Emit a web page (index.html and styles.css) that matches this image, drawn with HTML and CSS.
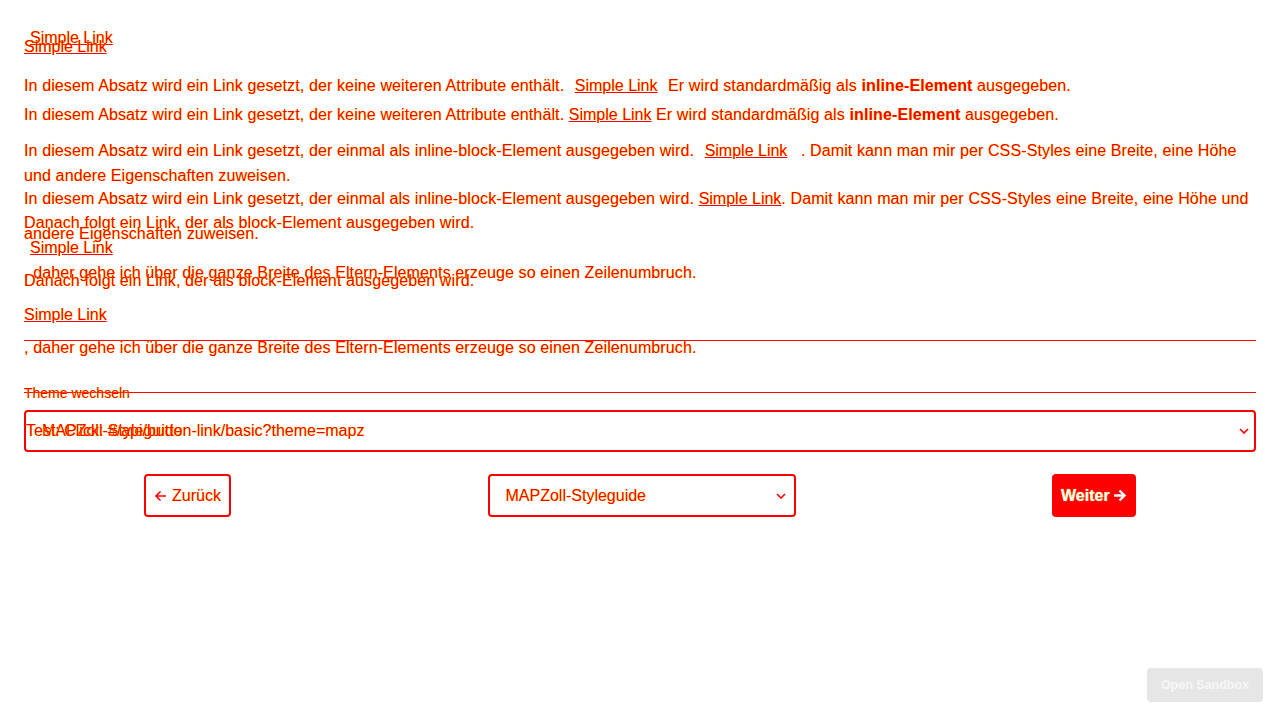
FILE: index.html
```html
<!DOCTYPE html>
<html lang="de">
<head>
<meta charset="utf-8">
<title>Button Link</title>
<link rel="stylesheet" href="styles.css">
</head>
<body>
<div class="stage">
  <div class="layer layer-a">
    <div class="a-l1"><a class="lnk lnk-pad" href="#">Simple Link</a></div>
    <p class="a-p1">In diesem Absatz wird ein Link gesetzt, der keine weiteren Attribute enthält. <a class="lnk lnk-pad" href="#">Simple Link</a> Er wird standardmäßig als <b>inline-Element</b> ausgegeben.</p>
    <p class="a-p2">In diesem Absatz wird ein Link gesetzt, der einmal als inline-block-Element ausgegeben wird. <a class="lnk lnk-pad lnk-wide" href="#">Simple Link</a> . Damit kann man mir per CSS-Styles eine Breite, eine Höhe und andere Eigenschaften zuweisen.</p>
    <p class="a-p3">Danach folgt ein Link, der als block-Element ausgegeben wird.</p>
    <a class="lnk lnk-block" href="#">Simple Link</a>
    <p class="a-p4">, daher gehe ich über die ganze Breite des Eltern-Elements erzeuge so einen Zeilenumbruch.</p>
  </div>

  <div class="layer layer-b">
    <div class="b-l1"><a class="lnk" href="#">Simple Link</a></div>
    <p class="b-p1">In diesem Absatz wird ein Link gesetzt, der keine weiteren Attribute enthält. <a class="lnk" href="#">Simple Link</a> Er wird standardmäßig als <b>inline-Element</b> ausgegeben.</p>
    <p class="b-p2">In diesem Absatz wird ein Link gesetzt, der einmal als inline-block-Element ausgegeben wird. <a class="lnk" href="#">Simple Link</a>. Damit kann man mir per CSS-Styles eine Breite, eine Höhe und andere Eigenschaften zuweisen.</p>
    <p class="b-p3">Danach folgt ein Link, der als block-Element ausgegeben wird.</p>
    <div class="b-block"><a class="lnk" href="#">Simple Link</a></div>
    <div class="rule rule-block"></div>
    <p class="b-p4">, daher gehe ich über die ganze Breite des Eltern-Elements erzeuge so einen Zeilenumbruch.</p>

    <div class="theme">
      <div class="rule"></div>
      <div class="legend">Theme wechseln</div>
      <div class="select select-wide">
        <span class="sel-ghost">Test: Click: #/api/button-link/basic?theme=mapz</span>
        <span class="sel-text">MAPZoll-Styleguide</span>
        <svg class="chev" width="10" height="6" viewBox="0 0 10 6"><path d="M1 1l4 4 4-4" fill="none" stroke="#f00" stroke-width="1.6"/></svg>
      </div>
    </div>

    <div class="nav">
      <a class="btn btn-outline" href="#"><svg class="ico" width="13" height="12" viewBox="0 0 13 12"><path d="M12 6H2M6.5 1.5L2 6l4.5 4.5" fill="none" stroke="#f00" stroke-width="1.6"/></svg>Zurück</a>
      <div class="select select-mid">
        <span class="sel-text">MAPZoll-Styleguide</span>
        <svg class="chev" width="10" height="6" viewBox="0 0 10 6"><path d="M1 1l4 4 4-4" fill="none" stroke="#f00" stroke-width="1.6"/></svg>
      </div>
      <a class="btn btn-solid" href="#">Weiter<svg class="ico-r" width="14" height="13" viewBox="0 0 14 13"><path d="M1 6.5h10M6.5 1.5l5 5-5 5" fill="none" stroke="#fff" stroke-width="2.4"/></svg></a>
    </div>
  </div>
</div>
<a class="sandbox" href="#">Open Sandbox</a>
</body>
</html>
```

FILE: styles.css
```css
html, body {
  margin: 0;
  padding: 0;
  background: #fff;
}
body {
  font-family: "Liberation Sans", Arial, sans-serif;
  font-size: 16px;
  color: #f00;
  width: 1280px;
  height: 720px;
  overflow: hidden;
}
.stage {
  position: relative;
  width: 1280px;
  height: 720px;
}
.layer {
  position: absolute;
  top: 0;
  left: 0;
  right: 0;
  padding: 0 24px;
  letter-spacing: 0.12px;
  text-shadow: 0 0 1px #ff0;
}
p { margin: 0; }
b { font-weight: bold; }
.lnk {
  color: #f00;
  text-decoration: underline;
  letter-spacing: 0;
}
.lnk-pad {
  display: inline-block;
  padding: 0 6px;
}
.lnk-wide { padding-right: 9px; }
.lnk-block {
  display: block;
  padding: 0 6px;
  line-height: 25px;
}

/* layer A */
.layer-a { line-height: 25px; }
.a-l1 { margin-top: 25px; }
.a-p1 { margin-top: 23px; }
.a-p2 { margin-top: 40px; }
.a-p3 { margin-top: 22px; }

/* layer B */
.layer-b { line-height: 34px; }
.b-l1 { margin-top: 30px; }
.b-p1 { margin-top: 34px; }
.b-p2 { margin-top: 49px; line-height: 35px; }
.b-p3 { margin-top: 13px; }
.rule {
  height: 0;
  border-top: 1px solid #f00;
}
.rule-block { margin-top: 8px; }
.b-p4 { line-height: 14px; }

.theme { margin-top: 37px; }
.legend {
  margin-top: -8px;
  line-height: 16px;
  font-size: 14px;
  letter-spacing: 0;
}
.select {
  position: relative;
  display: flex;
  align-items: center;
  box-sizing: border-box;
  border: 2px solid #f00;
  border-radius: 4px;
  background: transparent;
  letter-spacing: 0;
}
.select-wide {
  margin-top: 9px;
  height: 42px;
  padding: 0 5px 0 16px;
}
.sel-text {
  flex: 1;
  line-height: 20px;
}
.sel-ghost {
  position: absolute;
  left: 0;
  top: 0;
  bottom: 0;
  display: flex;
  align-items: center;
}
.chev { flex: none; }

.nav {
  margin-top: 22px;
  padding: 0 120px;
  display: flex;
  justify-content: space-between;
  align-items: center;
  letter-spacing: 0;
}
.btn {
  box-sizing: border-box;
  height: 43px;
  display: flex;
  align-items: center;
  border-radius: 4px;
  text-decoration: none;
  line-height: 20px;
}
.btn-outline {
  width: 87px;
  padding: 0 8px;
  border: 2px solid #f00;
  color: #f00;
}
.ico { margin-right: 5px; flex: none; }
.btn-solid {
  width: 84px;
  padding: 0 9px;
  background: #f00;
  color: #fff;
  font-weight: bold;
}
.ico-r { margin-left: 3px; flex: none; }
.select-mid {
  width: 308px;
  height: 43px;
  padding: 0 8px 0 16px;
}

.sandbox {
  position: fixed;
  right: 17px;
  bottom: 18px;
  width: 116px;
  height: 34px;
  display: flex;
  align-items: center;
  justify-content: center;
  background: #e6e6e6;
  color: #f7f7f7;
  border-radius: 4px;
  font-family: "Liberation Sans", Arial, sans-serif;
  font-size: 12.5px;
  font-weight: bold;
  text-decoration: none;
}
```
